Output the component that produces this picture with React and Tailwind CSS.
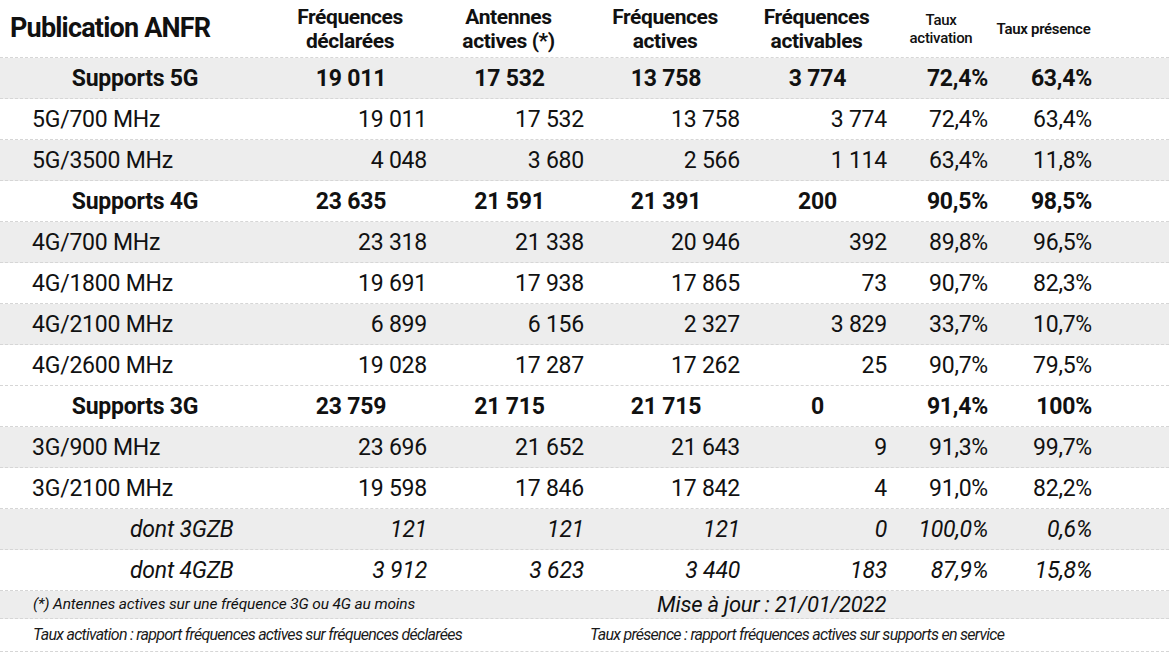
import React from "react";

const rows = [
  { label: "Supports 5G", kind: "group", gray: true, v: ["19 011", "17 532", "13 758", "3 774", "72,4%", "63,4%"] },
  { label: "5G/700 MHz", kind: "item", gray: false, v: ["19 011", "17 532", "13 758", "3 774", "72,4%", "63,4%"] },
  { label: "5G/3500 MHz", kind: "item", gray: true, v: ["4 048", "3 680", "2 566", "1 114", "63,4%", "11,8%"] },
  { label: "Supports 4G", kind: "group", gray: false, v: ["23 635", "21 591", "21 391", "200", "90,5%", "98,5%"] },
  { label: "4G/700 MHz", kind: "item", gray: true, v: ["23 318", "21 338", "20 946", "392", "89,8%", "96,5%"] },
  { label: "4G/1800 MHz", kind: "item", gray: false, v: ["19 691", "17 938", "17 865", "73", "90,7%", "82,3%"] },
  { label: "4G/2100 MHz", kind: "item", gray: true, v: ["6 899", "6 156", "2 327", "3 829", "33,7%", "10,7%"] },
  { label: "4G/2600 MHz", kind: "item", gray: false, v: ["19 028", "17 287", "17 262", "25", "90,7%", "79,5%"] },
  { label: "Supports 3G", kind: "group", gray: false, v: ["23 759", "21 715", "21 715", "0", "91,4%", "100%"] },
  { label: "3G/900 MHz", kind: "item", gray: true, v: ["23 696", "21 652", "21 643", "9", "91,3%", "99,7%"] },
  { label: "3G/2100 MHz", kind: "item", gray: false, v: ["19 598", "17 846", "17 842", "4", "91,0%", "82,2%"] },
  { label: "dont 3GZB", kind: "sub", gray: true, v: ["121", "121", "121", "0", "100,0%", "0,6%"] },
  { label: "dont 4GZB", kind: "sub", gray: false, v: ["3 912", "3 623", "3 440", "183", "87,9%", "15,8%"] },
];

const grid = "grid grid-cols-[270px_160px_157px_156px_147px_102px_103px_1fr]";

function Row({ row }) {
  const group = row.kind === "group";
  const sub = row.kind === "sub";
  return (
    <div
      className={`${grid} h-[41px] pt-[2px] items-center border-b border-dashed border-[#d6d6d6] text-[23px] tracking-[-0.01em] ${
        row.gray ? "bg-[#ededed]" : "bg-white"
      } ${group ? "font-bold" : ""} ${sub ? "italic" : ""}`}
    >
      <div className={group ? "text-center" : sub ? "pl-[130px]" : "pl-[32px]"}>{row.label}</div>
      {row.v.slice(0, 4).map((n, i) => (
        <div key={i} className={group ? "text-center pl-[2px]" : "text-right pr-[3px]"}>
          {n}
        </div>
      ))}
      <div className="text-right pr-[4px]">{row.v[4]}</div>
      <div className="text-right pr-[3px]">{row.v[5]}</div>
      <div />
    </div>
  );
}

export default function App() {
  return (
    <div className="w-[1169px] h-[658px] bg-white text-[#111] font-['Roboto',sans-serif] overflow-hidden">
      {/* header */}
      <div className={`${grid} h-[58px] items-center border-b border-dashed border-[#d6d6d6] font-bold`}>
        <div className="pl-[10px] text-[27px] tracking-[-0.03em]">Publication ANFR</div>
        <div className="text-center text-[21px] leading-[24px] tracking-[-0.02em]">
          Fréquences
          <br />
          déclarées
        </div>
        <div className="text-center text-[21px] leading-[24px] tracking-[-0.02em]">
          Antennes
          <br />
          actives (*)
        </div>
        <div className="text-center text-[21px] leading-[24px] tracking-[-0.02em]">
          Fréquences
          <br />
          actives
        </div>
        <div className="text-center text-[21px] leading-[24px] tracking-[-0.02em]">
          Fréquences
          <br />
          activables
        </div>
        <div className="text-center text-[15px] leading-[18px] font-medium tracking-[-0.02em]">
          Taux
          <br />
          activation
        </div>
        <div className="text-center text-[15px] leading-[18px] font-semibold tracking-[-0.02em] whitespace-nowrap">
          Taux présence
        </div>
        <div />
      </div>

      {rows.map((r) => (
        <Row key={r.label} row={r} />
      ))}

      {/* footnotes */}
      <div className="flex h-[28px] items-center bg-[#ededed] border-b border-dashed border-[#d6d6d6] italic">
        <div className="w-[657px] pl-[33px] text-[15.5px] tracking-[-0.01em]">(*) Antennes actives sur une fréquence 3G ou 4G au moins</div>
        <div className="text-[22px] tracking-[-0.01em]">Mise à jour : 21/01/2022</div>
      </div>
      <div className="flex h-[33px] items-center border-b border-dashed border-[#d6d6d6] italic text-[16px] tracking-[-0.045em] text-[#1a1a1a]">
        <div className="w-[590px] pl-[33px]">Taux activation : rapport fréquences actives sur fréquences déclarées</div>
        <div>Taux présence : rapport fréquences actives sur supports en service</div>
      </div>
    </div>
  );
}
